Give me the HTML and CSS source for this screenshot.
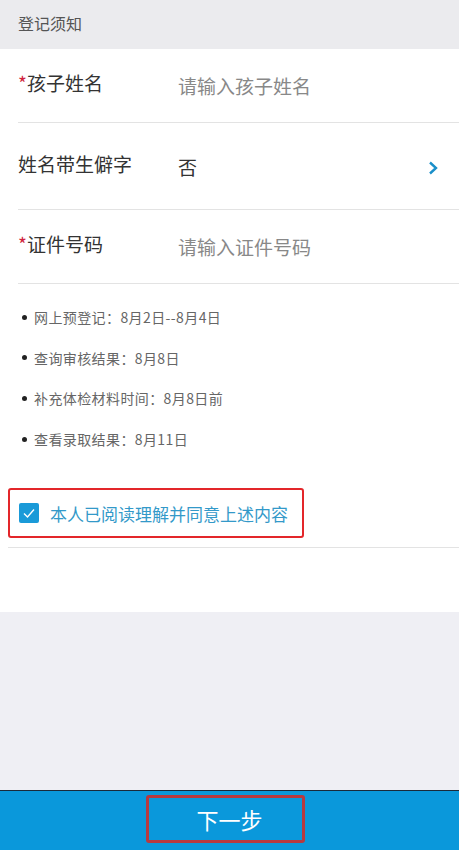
FILE: index.html
```html
<!DOCTYPE html>
<html lang="zh-CN">
<head>
<meta charset="utf-8" />
<title>登记须知</title>
<link rel="stylesheet" href="styles.css">
</head>
<body>
	<div class="page">
		<div class="hd">登记须知</div>

		<div class="form">
			<div class="row row1">
				<label class="lab"><i>*</i>孩子姓名</label>
				<span class="ipt">请输入孩子姓名</span>
			</div>
			<div class="row row2">
				<label class="lab">姓名带生僻字</label>
				<span class="val">否</span>
				<svg class="arr" width="12" height="16" viewBox="0 0 12 16"><path d="M3 2.5 L9 8 L3 13.5" fill="none" stroke="#1a8fc9" stroke-width="2.4"/></svg>
			</div>
			<div class="row row3">
				<label class="lab"><i>*</i>证件号码</label>
				<span class="ipt">请输入证件号码</span>
			</div>

			<ul class="tips">
				<li>网上预登记：8月2日--8月4日</li>
				<li>查询审核结果：8月8日</li>
				<li>补充体检材料时间：8月8日前</li>
				<li>查看录取结果：8月11日</li>
			</ul>

			<div class="agree">
				<div class="agree_box">
					<span class="chk"><svg width="20" height="20" viewBox="0 0 20 20"><path d="M5 10.5 L8.5 14 L15 6.5" fill="none" stroke="#fff" stroke-width="1.4"/></svg></span>
					<span class="agree_txt">本人已阅读理解并同意上述内容</span>
				</div>
			</div>
		</div>

		<div class="space"></div>

		<div class="ft">
			<a href="javascript:;" class="next">下一步</a>
		</div>
	</div>
</body>
</html>
```

FILE: styles.css
```css
*{ padding:0; margin:0; box-sizing:border-box; }
body{ font-family:"Microsoft YaHei","Noto Sans CJK SC","Noto Sans",sans-serif; background:#efeff4; }
.page{ display:flex; flex-direction:column; height:850px; }

.hd{ height:49px; line-height:46px; padding-left:18px; font-size:16px; color:#555; background:#ebebee; }

.form{ background:#fff; padding-left:18px; height:563px; }
.row{ display:flex; align-items:center; border-bottom:1px solid #e3e3e3; padding-right:20px; }
.row1, .row3{ height:74px; }
.row2{ height:87px; }
.lab{ width:160px; font-size:19px; color:#333; margin-top:-6px; }
.lab i{ font-style:normal; color:#d0243c; font-size:19px; }
.ipt, .val{ flex:1; font-size:19px; color:#888; }
.val{ color:#333; }
.arr{ margin-top:4px; }

.tips{ list-style:none; padding:13px 0 0 4px; height:194px; }
.tips li{ font-size:14px; line-height:40.6px; color:#666; display:flex; align-items:center; letter-spacing:0.4px; }
.tips li:before{ content:""; width:5px; height:5px; border-radius:50%; background:#222; margin-right:7px; }

.agree{ border-bottom:1px solid #e3e3e3; height:70px; margin-left:-10px; padding-top:10px; }
.agree_box{ display:inline-flex; align-items:center; width:296px; height:50px; padding-left:9px; border:2px solid #e3262a; border-radius:3px; }
.chk{ width:20px; height:20px; border-radius:2px; background:#1a9ad8; display:block; }
.chk svg{ display:block; }
.agree_txt{ margin-left:11px; font-size:17px; color:#3399c9; }

.space{ flex:1; }

.ft{ height:60px; background:#0a98db; border-top:1px solid #1a2a3a; display:flex; justify-content:center; align-items:flex-start; padding-top:4px; }
.next{ display:block; width:159px; height:48px; margin-right:8px; padding-left:8px; line-height:43px; text-align:center; font-size:22px; color:#fff; text-decoration:none; border:3px solid #b8393f; border-radius:3px; }
```
